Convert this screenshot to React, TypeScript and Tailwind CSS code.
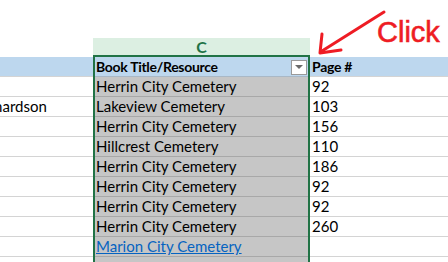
import React from "react";

const rows: { t: string; p: string; link?: boolean }[] = [
  { t: "Herrin City Cemetery", p: "92" },
  { t: "Lakeview Cemetery", p: "103" },
  { t: "Herrin City Cemetery", p: "156" },
  { t: "Hillcrest Cemetery", p: "110" },
  { t: "Herrin City Cemetery", p: "186" },
  { t: "Herrin City Cemetery", p: "92" },
  { t: "Herrin City Cemetery", p: "92" },
  { t: "Herrin City Cemetery", p: "260" },
  { t: "Marion City Cemetery", p: "", link: true },
  { t: "", p: "" },
];

export default function App() {
  return (
    <div
      className="relative w-[448px] h-[262px] overflow-hidden bg-white text-[15px] text-black"
      style={{ fontFamily: "Lato, 'Liberation Sans', sans-serif" }}
    >
      <div className="flex pt-[38px]">
        {/* Column A/B */}
        <div className="w-[93px] shrink-0 flex flex-col">
          <div className="h-[19px]" />
          <div className="h-[20px] bg-[#bdd7ee] border-b border-[#d4d4d4]" />
          {rows.map((r, i) => (
            <div key={i} className="h-[20px] border-b border-[#d4d4d4] flex items-center overflow-hidden whitespace-nowrap">
              {i === 1 ? <span className="ml-[-26px]">Richardson</span> : null}
            </div>
          ))}
        </div>
        {/* Column C */}
        <div className="w-[217px] shrink-0 flex flex-col">
          <div className="h-[17px] bg-[#dcefe2] flex items-center justify-center text-[#217346] text-[16px] font-bold leading-none">
            C
          </div>
          <div className="border-x-2 border-t-2 border-[#217346] flex flex-col">
            <div className="h-[20px] bg-[#bdd7ee] border-b border-[#a9b8c6] flex items-center pl-[1px] pr-[1px] relative">
              <span className="font-bold whitespace-nowrap text-[14px] tracking-[-0.3px]">Book Title/Resource</span>
              <div className="absolute right-[1px] bottom-[1px] w-[16px] h-[15px] bg-white border border-[#9a9a9a] flex items-center justify-center">
                <svg width="8" height="5" viewBox="0 0 8 5">
                  <polygon points="0,0 8,0 4,4" fill="#6b6b6b" />
                </svg>
              </div>
            </div>
            {rows.map((r, i) => (
              <div key={i} className="h-[20px] bg-[#c6c6c6] border-b border-[#a8a8a8] flex items-center pl-[1px] whitespace-nowrap overflow-hidden">
                {r.link ? (
                  <span className="text-[#0563c1] underline">{r.t}</span>
                ) : (
                  <span>{r.t}</span>
                )}
              </div>
            ))}
          </div>
        </div>
        {/* Column D */}
        <div className="flex-1 flex flex-col">
          <div className="h-[19px]" />
          <div className="h-[20px] bg-[#bdd7ee] border-b border-[#d4d4d4] flex items-center pl-[2px]">
            <span className="font-bold text-[14px] tracking-[-0.3px]">Page #</span>
          </div>
          {rows.map((r, i) => (
            <div key={i} className="h-[20px] border-b border-[#d4d4d4] flex items-center pl-[2px]">
              {r.p}
            </div>
          ))}
        </div>
      </div>

      {/* Annotation */}
      <svg className="absolute left-0 top-0" width="448" height="262" viewBox="0 0 448 262">
        <line x1="384" y1="12" x2="322" y2="51" stroke="#ee1c24" strokeWidth="3" strokeLinecap="round" />
        <polyline points="322,34 320,53 341,50" fill="none" stroke="#ee1c24" strokeWidth="3" strokeLinecap="round" strokeLinejoin="round" />
      </svg>
      <div
        className="absolute left-[377px] top-[18px] text-[29px] leading-none text-[#ee1c24]"
        style={{ fontFamily: "'Liberation Sans', Arial, sans-serif", WebkitTextStroke: "0.6px #ee1c24" }}
      >
        Click
      </div>
    </div>
  );
}
